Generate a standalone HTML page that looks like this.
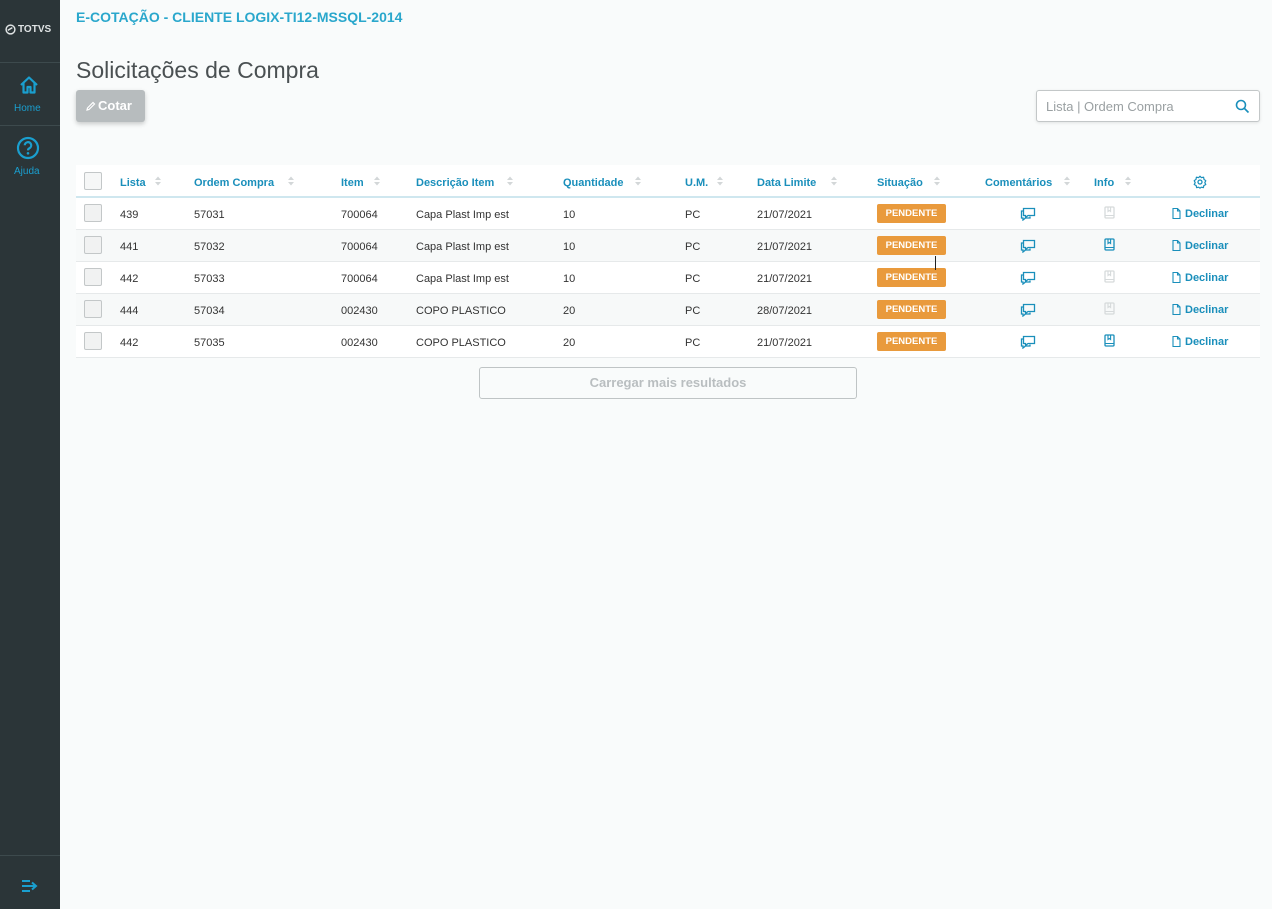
<!DOCTYPE html>
<html><head><meta charset="utf-8"><style>
*{margin:0;padding:0;box-sizing:border-box}
body{width:1272px;height:909px;background:#f9fbfb;font-family:"Liberation Sans",sans-serif;position:relative;overflow:hidden;color:#333}
.side{position:absolute;left:0;top:0;width:60px;height:909px;background:#2b3538}
.sep{position:absolute;left:0;width:60px;height:1px;background:#3d4a4d}
.ab{position:absolute;white-space:nowrap}
.hd{position:absolute;left:76px;top:165px;width:1184px;height:33px;background:#fff;border-bottom:2px solid #cfe7ef}
.row{position:absolute;left:76px;width:1184px;height:32px;border-bottom:1px solid #e6e9ea}
.th{position:absolute;top:177px;font-size:11px;font-weight:bold;color:#1a8fbb}
.ar{position:absolute;top:175px;width:6px;height:12px}
.td{position:absolute;font-size:11px;color:#333}
.cb{position:absolute;width:18px;height:18px;border:1px solid #c3c7c8;border-radius:2px;background:#f1f2f2}
.pend{position:absolute;left:877px;width:69px;height:19px;background:#e99a3c;border-radius:2px;color:#fff;font-size:9.5px;font-weight:bold;text-align:center;line-height:19px}
.dec{position:absolute;left:1172px;font-size:11px;font-weight:bold;color:#1a8fbb}
</style></head><body>
<div class="side">
  <div class="ab" style="left:5px;top:24px;color:#dfe3e4;font-size:10px;font-weight:bold;display:flex;align-items:center;gap:2px">
    <svg width="11" height="11" viewBox="0 0 12 12"><circle cx="6" cy="6" r="4.8" fill="none" stroke="#dfe3e4" stroke-width="1.6"/><path d="M3 7 L8 4" stroke="#dfe3e4" stroke-width="1.6"/></svg>TOTVS</div>
  <div class="sep" style="top:62px"></div>
  <svg class="ab" style="left:19px;top:75px" width="20" height="20" viewBox="0 0 20 20"><path d="M2 10 L10 2.5 L18 10 M4.5 8 V17.5 H8.5 V12 H11.5 V17.5 H15.5 V8" fill="none" stroke="#1a9fcf" stroke-width="2.2" stroke-linejoin="round"/></svg>
  <div class="ab" style="left:14px;top:103px;font-size:10px;color:#1a9fcf">Home</div>
  <div class="sep" style="top:125px"></div>
  <svg class="ab" style="left:16px;top:136px" width="24" height="24" viewBox="0 0 24 24"><circle cx="12" cy="12" r="10" fill="none" stroke="#1a9fcf" stroke-width="2.2"/><path d="M8.8 9.3 a3.2 3.2 0 1 1 4.6 2.9 c-1 .5-1.4 1-1.4 2.2" fill="none" stroke="#1a9fcf" stroke-width="2.2"/><circle cx="12" cy="17.3" r="1.3" fill="#1a9fcf"/></svg>
  <div class="ab" style="left:14px;top:166px;font-size:10px;color:#1a9fcf">Ajuda</div>
  <div class="sep" style="top:855px"></div>
  <svg class="ab" style="left:21px;top:879px" width="18" height="14" viewBox="0 0 18 14"><path d="M1 2 H9 M1 7 H14 M1 12 H9 M11 3.5 L15 7 L11 10.5" fill="none" stroke="#1a9fcf" stroke-width="2"/></svg>
</div>
<div class="ab" style="left:76px;top:9px;font-size:14px;font-weight:bold;color:#2aa7cc">E-COTAÇÃO - CLIENTE LOGIX-TI12-MSSQL-2014</div>
<div class="ab" style="left:76px;top:57px;font-size:23px;color:#4a5052">Solicitações de Compra</div>
<div class="ab" style="left:76px;top:90px;width:69px;height:32px;background:#b7bcbe;border-radius:3px;box-shadow:0 2px 5px rgba(0,0,0,.2);color:#fff;font-size:13px;font-weight:bold;line-height:31px;padding-left:10px">
<svg width="10" height="10" viewBox="0 0 10 10" style="vertical-align:-1px;margin-right:2px"><path d="M1 9 L1.5 7 L7 1.5 L8.5 3 L3 8.5 Z" fill="none" stroke="#fff" stroke-width="1.2"/></svg>Cotar</div>
<div class="ab" style="left:1036px;top:90px;width:224px;height:32px;background:#fff;border:1px solid #c3c7c8;border-radius:3px;box-shadow:0 1px 3px rgba(0,0,0,.1)">
  <span class="ab" style="left:9px;top:8px;font-size:13px;color:#9aa0a2">Lista | Ordem Compra</span>
  <svg class="ab" style="left:198px;top:8px" width="15" height="15" viewBox="0 0 15 15"><circle cx="6" cy="6" r="4.5" fill="none" stroke="#1a8fbb" stroke-width="1.6"/><path d="M9.5 9.5 L13.5 13.5" stroke="#1a8fbb" stroke-width="1.6"/></svg>
</div>
<div class="hd"></div>
<div class="cb" style="left:84px;top:172px;background:#f6f7f7"></div>
<div class="th" style="left:120px">Lista</div>
<div class="th" style="left:194px">Ordem Compra</div>
<div class="th" style="left:341px">Item</div>
<div class="th" style="left:416px">Descrição Item</div>
<div class="th" style="left:563px">Quantidade</div>
<div class="th" style="left:685px">U.M.</div>
<div class="th" style="left:757px">Data Limite</div>
<div class="th" style="left:877px">Situação</div>
<div class="th" style="left:985px">Comentários</div>
<div class="th" style="left:1094px">Info</div>
<svg class="ab" style="left:1193px;top:175px" width="14" height="14" viewBox="0 0 14 14"><circle cx="7" cy="7" r="2" fill="none" stroke="#1a8fbb" stroke-width="1.3"/><path d="M7 1.2 L8.3 2.6 L10.6 2.2 L11 4.4 L12.8 5.7 L11.8 7.7 L12.8 9.5 L10.8 10.6 L10.4 12.6 L8.3 12.2 L7 13.2 L5.7 12.2 L3.6 12.6 L3.2 10.6 L1.2 9.5 L2.2 7.7 L1.2 5.7 L3 4.4 L3.4 2.2 L5.7 2.6 Z" fill="none" stroke="#1a8fbb" stroke-width="1.2" stroke-linejoin="round"/></svg>
<svg width="0" height="0" style="position:absolute"><defs><g id="ar"><path d="M0 5 L3 1.5 L6 5 Z M0 7 L3 10.5 L6 7 Z" fill="#d3d7d8"/></g></defs></svg>
<svg class="ar" style="left:155px"><use href="#ar"/></svg>
<svg class="ar" style="left:288px"><use href="#ar"/></svg>
<svg class="ar" style="left:374px"><use href="#ar"/></svg>
<svg class="ar" style="left:507px"><use href="#ar"/></svg>
<svg class="ar" style="left:635px"><use href="#ar"/></svg>
<svg class="ar" style="left:717px"><use href="#ar"/></svg>
<svg class="ar" style="left:831px"><use href="#ar"/></svg>
<svg class="ar" style="left:934px"><use href="#ar"/></svg>
<svg class="ar" style="left:1064px"><use href="#ar"/></svg>
<svg class="ar" style="left:1125px"><use href="#ar"/></svg>

<svg width="0" height="0" style="position:absolute"><defs>
<g id="cm"><path d="M3.5 1.5 H14.5 V8.5 H8 L5.5 10.5 V8.5 H3.5 Z" fill="none" stroke="#1a8fbb" stroke-width="1.3"/><path d="M3.5 4 H1.5 V11 H3 V13 L5.5 11 H10 V9.5" fill="none" stroke="#1a8fbb" stroke-width="1.3"/></g>
<g id="dc"><path d="M1 .5 H5.5 L8 3 V10.5 H1 Z M5.5 .5 V3 H8" fill="none" stroke="#1a8fbb" stroke-width="1.1"/></g>
</defs></svg>

<div class="row" style="top:198px;background:#fff"></div>
<div class="row" style="top:230px;background:#f7f9f9"></div>
<div class="row" style="top:262px;background:#fff"></div>
<div class="row" style="top:294px;background:#f7f9f9"></div>
<div class="row" style="top:326px;background:#fff"></div>

<div id="rows"></div>
<script>
var d=[["439","57031","700064","Capa Plast Imp est","10","PC","21/07/2021",0],
["441","57032","700064","Capa Plast Imp est","10","PC","21/07/2021",1],
["442","57033","700064","Capa Plast Imp est","10","PC","21/07/2021",0],
["444","57034","002430","COPO PLASTICO","20","PC","28/07/2021",0],
["442","57035","002430","COPO PLASTICO","20","PC","21/07/2021",1]];
var xs=[120,194,341,416,563,685,757],h="";
d.forEach(function(r,i){var c=214+i*32;
h+='<div class="cb" style="left:84px;top:'+(c-10)+'px"></div>';
for(var j=0;j<7;j++)h+='<div class="td" style="left:'+xs[j]+'px;top:'+(c-5)+'px">'+r[j]+'</div>';
h+='<div class="pend" style="top:'+(c-10)+'px">PENDENTE</div>';
h+='<svg class="ab" style="left:1020px;top:'+(c-7)+'px" width="17" height="14" viewBox="0 0 17 14"><use href="#cm"/></svg>';
var col=r[7]?"#1a8fbb":"#d6dadb";
h+='<svg class="ab" style="left:1104px;top:'+(c-8)+'px" width="11" height="13" viewBox="0 0 11 13"><rect x="1" y="1" width="9" height="11" rx="1" fill="none" stroke="'+col+'" stroke-width="1.3"/><path d="M1 9.5 H10 M4 1 V5.5 L5.3 4.5 L6.6 5.5 V1" fill="none" stroke="'+col+'" stroke-width="1.1"/></svg>';
h+='<svg class="ab" style="left:1172px;top:'+(c-6)+'px" width="9" height="11" viewBox="0 0 9 11"><use href="#dc"/></svg>';
h+='<div class="dec" style="left:1185px;top:'+(c-6)+'px">Declinar</div>';
});
document.getElementById("rows").innerHTML=h;
</script>
<div class="ab" style="left:935px;top:256px;width:1px;height:14px;background:#222"></div>
<div class="ab" style="left:479px;top:367px;width:378px;height:32px;border:1px solid #bfc4c5;border-radius:3px;text-align:center;line-height:30px;font-size:13px;font-weight:bold;color:#b9bec0">Carregar mais resultados</div>
</body></html>
